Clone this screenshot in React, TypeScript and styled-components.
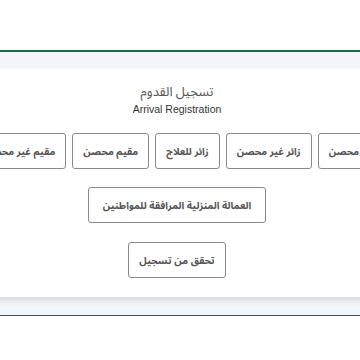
import type { FC } from 'react';
import styled, { createGlobalStyle } from 'styled-components';

const GlobalStyle = createGlobalStyle`
  html, body {
    margin: 0;
    padding: 0;
    background: #ffffff;
    overflow: hidden;
  }
  body {
    font-family: "Noto Sans Arabic", "DejaVu Sans", "Liberation Sans", sans-serif;
  }
`;

const Page = styled.div`
  width: 360px;
  height: 360px;
  overflow: hidden;
  background: #ffffff;
`;

const TopSpace = styled.div`
  height: 50px;
`;

const Section = styled.section`
  background: #f3f6f9;
  border-top: 2px solid #1b6a44;
  border-bottom: 1px solid #1b6a44;
  padding: 17px 0 18px;
`;

const Card = styled.div`
  background: #ffffff;
  margin: 0 -34px 0 -40px;
  padding: 14px 7px 19px;
  box-shadow: 0 5px 8px -2px rgba(0, 0, 0, 0.13);
  display: flex;
  flex-direction: column;
  align-items: center;
`;

const TitleAr = styled.div`
  font-family: "Noto Sans Arabic", "DejaVu Sans", sans-serif;
  font-size: 13px;
  line-height: 18px;
  margin-bottom: 1px;
  color: #555555;
  direction: rtl;
`;

const TitleEn = styled.div`
  font-family: "Liberation Sans", Arial, sans-serif;
  font-size: 10.5px;
  line-height: 14px;
  color: #333333;
`;

const Row = styled.div<{ $align?: 'start' | 'center'; $gap: number }>`
  direction: rtl;
  display: flex;
  flex-wrap: nowrap;
  gap: 6px;
  align-self: stretch;
  justify-content: ${({ $align = 'center' }) =>
    $align === 'start' ? 'flex-start' : 'center'};
  margin-top: ${({ $gap }) => $gap}px;
`;

const OptionButton = styled.button<{ $wide?: boolean }>`
  flex: none;
  height: 36px;
  padding: 0 ${({ $wide }) => ($wide ? 14 : 10)}px;
  background: #ffffff;
  border: 1px solid #8a8a8a;
  border-radius: 3px;
  color: #555555;
  font-family: "Noto Sans Arabic", "DejaVu Sans", sans-serif;
  font-size: 10px;
  font-weight: bold;
  white-space: nowrap;
  cursor: pointer;
`;

const visitorTypes = [
  'زائر محصن',
  'زائر غير محصن',
  'زائر للعلاج',
  'مقيم محصن',
  'مقيم غير محصن',
];

const App: FC = () => (
  <Page>
    <GlobalStyle />
    <TopSpace />
    <Section>
      <Card>
        <TitleAr>تسجيل القدوم</TitleAr>
        <TitleEn>Arrival Registration</TitleEn>
        <Row $align='start' $gap={17}>
          {visitorTypes.map((label) => (
            <OptionButton key={label}>{label}</OptionButton>
          ))}
        </Row>
        <Row $gap={18}>
          <OptionButton $wide>العمالة المنزلية المرافقة للمواطنين</OptionButton>
        </Row>
        <Row $gap={19}>
          <OptionButton>تحقق من تسجيل</OptionButton>
        </Row>
      </Card>
    </Section>
  </Page>
);

export default App;
